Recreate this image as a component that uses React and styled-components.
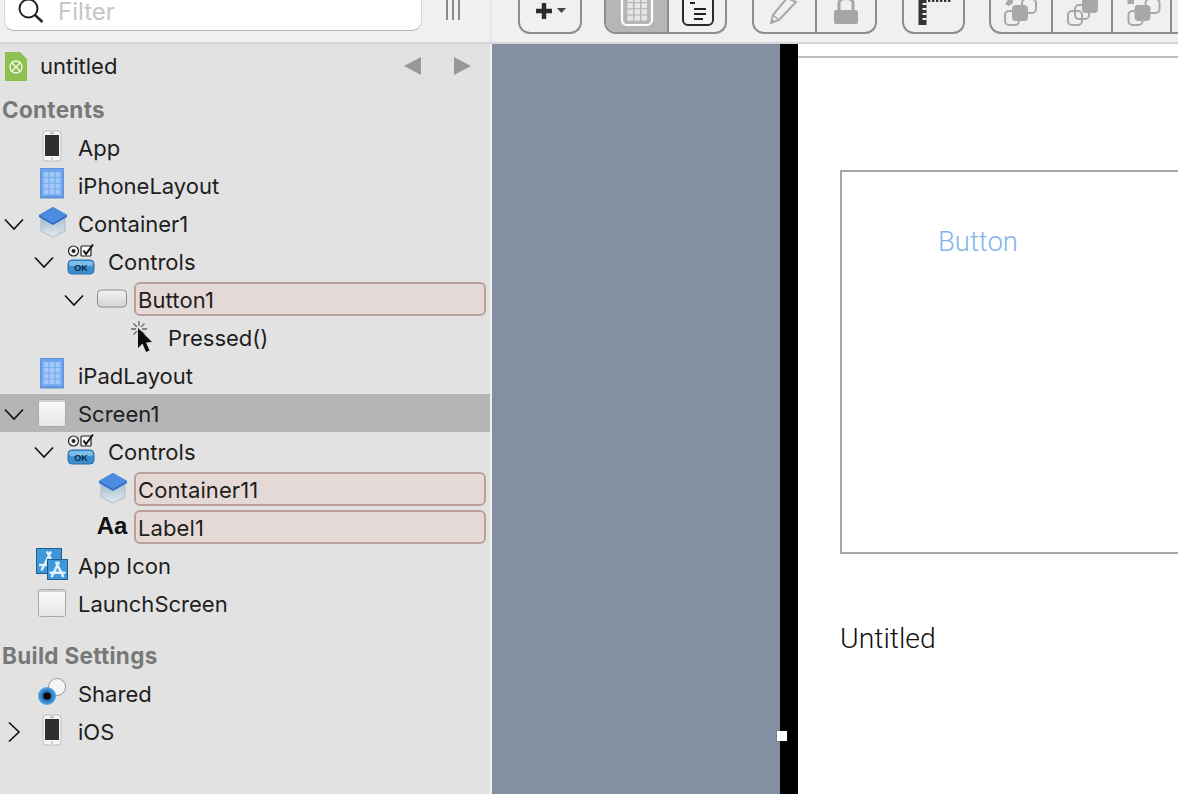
import React from "react";
import styled, { createGlobalStyle } from "styled-components";

const GlobalStyle = createGlobalStyle`
  html, body {
    margin: 0;
    padding: 0;
    width: 1178px;
    height: 794px;
    overflow: hidden;
    background: #f0f0f0;
    font-family: Inter, "Liberation Sans", sans-serif;
  }
`;

const Page = styled.div`
  width: 1178px;
  height: 794px;
  display: flex;
  flex-direction: column;
  overflow: hidden;
`;

const Toolbar = styled.div`
  display: flex;
  height: 42px;
  flex-shrink: 0;
  background: #f0f0f0;
  border-bottom: 2px solid #d6d6d6;
`;

const FilterArea = styled.div`
  width: 492px;
  flex-shrink: 0;
  display: flex;
  align-items: flex-start;
  padding-left: 4px;
  box-sizing: border-box;
  border-right: 2px solid #e6e6e6;
`;

const FilterBox = styled.div`
  width: 418px;
  height: 31px;
  display: flex;
  align-items: center;
  gap: 14px;
  padding: 0 0 6px 13px;
  box-sizing: border-box;
  background: #fff;
  border-bottom: 1px solid #b4b4b4;
  border-left: 1px solid #d8d8d8;
  border-right: 1px solid #d8d8d8;
  border-radius: 0 0 10px 10px;
  color: #c6c6c6;
  font-size: 24px;
  line-height: 24px;
`;

const Grip = styled.div`
  margin-left: 24px;
  display: flex;
  gap: 4px;
  height: 20px;
`;

const GripLine = styled.div`
  width: 2px;
  background: #8a8a8a;
`;

const ToolGroups = styled.div`
  flex: 1;
  display: flex;
  align-items: flex-start;
  overflow: hidden;
`;

const ToolGroup = styled.div`
  display: flex;
  flex-shrink: 0;
  height: 34px;
  margin-left: ${({ $gap }) => $gap}px;
  box-sizing: border-box;
  border: 2px solid #8e8e8e;
  border-top: none;
  border-radius: 0 0 12px 12px;
  overflow: hidden;
`;

const ToolButton = styled.div`
  width: ${({ $w }) => $w}px;
  height: 100%;
  box-sizing: border-box;
  display: flex;
  justify-content: center;
  background: ${({ $on }) => ($on ? "#b6b6b6" : "transparent")};
  & + & {
    border-left: 2px solid #8e8e8e;
  }
`;

const Main = styled.div`
  flex: 1;
  display: flex;
  min-height: 0;
`;

const Sidebar = styled.div`
  width: 490px;
  flex-shrink: 0;
  background: #e2e2e2;
  padding-top: 3px;
  box-sizing: border-box;
  color: #1e1e1e;
  font-size: 22px;
`;

const Splitter = styled.div`
  width: 2px;
  background: #efefef;
`;

const ProjectRow = styled.div`
  height: 38px;
  display: flex;
  align-items: center;
  padding-left: 5px;
  gap: 13px;
`;

const ProjectName = styled.div`
  flex: 1;
`;

const NavArrows = styled.div`
  display: flex;
  gap: 33px;
  margin-right: 19px;
`;

const SectionTitle = styled.div`
  height: 38px;
  line-height: 38px;
  padding-left: 2px;
  margin-top: ${({ $top }) => $top}px;
  font-weight: 700;
  font-size: 22.5px;
  letter-spacing: 0.3px;
  color: #787878;
`;

const Row = styled.div`
  height: 38px;
  display: flex;
  align-items: center;
  padding-left: ${({ $level }) => $level * 30}px;
  background: ${({ $selected }) => ($selected ? "#b5b5b5" : "transparent")};
  box-shadow: ${({ $selected }) => ($selected ? "0 -1px 0 #b5b5b5, inset 0 -1px 0 #e2e2e2" : "none")};
`;

const Disclosure = styled.div`
  width: 28px;
  height: 38px;
  flex-shrink: 0;
  display: flex;
  align-items: center;
  justify-content: center;
`;

const IconSlot = styled.div`
  width: 48px;
  height: 38px;
  flex-shrink: 0;
  margin-right: 2px;
  display: flex;
  align-items: center;
  justify-content: center;
`;

const TypeMark = styled.span`
  font-family: "Liberation Sans", sans-serif;
  font-weight: 700;
  font-size: 24px;
  color: #111;
  margin-top: -4px;
`;

const NameField = styled.div`
  flex: 1;
  height: 34px;
  line-height: 32px;
  margin: -2px 4px 0 -4px;
  padding-left: 2px;
  box-sizing: border-box;
  background: #e5d9d8;
  border: 2px solid #bb9f9b;
  border-radius: 6px;
  letter-spacing: 0.1px;
`;

const Backdrop = styled.div`
  width: 288px;
  flex-shrink: 0;
  background: #8490a1;
  position: relative;
`;

const Handle = styled.div`
  position: absolute;
  right: -7px;
  top: 687px;
  width: 10px;
  height: 10px;
  background: #fff;
  box-shadow: 0 0 1px #333;
  z-index: 2;
`;

const DeviceEdge = styled.div`
  width: 18px;
  flex-shrink: 0;
  background: #000;
`;

const Canvas = styled.div`
  flex: 1;
  background: #fff;
  padding-top: 12px;
  overflow: hidden;
`;

const NavLine = styled.div`
  height: 2px;
  background: #bdbdbd;
`;

const ContainerBox = styled.div`
  margin: 112px -40px 0 42px;
  height: 384px;
  box-sizing: border-box;
  border: 2px solid #a6a6a6;
  padding: 54px 0 0 96px;
`;

const ButtonText = styled.div`
  color: #82b4f2;
  font-size: 27.5px;
  line-height: 32px;
  font-family: Roboto, "Liberation Sans", sans-serif;
  font-weight: 300;
`;

const LabelText = styled.div`
  margin: 68px 0 0 42px;
  color: #111;
  font-size: 28.4px;
  line-height: 34px;
  font-family: Roboto, "Liberation Sans", sans-serif;
  font-weight: 300;
`;

const Chevron = ({ open }) => (
  <svg width="22" height="22" viewBox="0 0 22 22" fill="none" stroke="#111" strokeWidth="1.6">
    {open ? <path d="M2 6.5 11 16 20 6.5" /> : <path d="M6 1.5 16 11 6 20.5" />}
  </svg>
);

const Cell = ({ children }) => (
  <svg width="48" height="38" viewBox="0 0 48 38">
    {children}
  </svg>
);

const PhoneIcon = () => (
  <Cell>
    <rect x="15" y="2" width="18" height="30" rx="3" fill="#f6f6f6" stroke="#bcbcbc" />
    <rect x="17" y="6" width="14" height="21" fill="#2e2e2e" />
    <circle cx="24" cy="29.5" r="1.3" fill="#ccc" />
    <rect x="22" y="3.6" width="4" height="1" fill="#888" />
  </Cell>
);

const GridIcon = () => (
  <Cell>
    <rect x="12.5" y="1.5" width="23" height="29" fill="#6ea5ee" stroke="#5f93dc" />
    <rect x="12" y="29.5" width="24" height="2" fill="#5f90d4" />
    {[0, 1, 2, 3].map((r) =>
      [0, 1, 2].map((c) => (
        <rect key={`${r}-${c}`} x={15.5 + c * 6} y={5 + r * 5.8} width="5" height="5" fill="#a2c8f7" />
      ))
    )}
  </Cell>
);

const CubeIcon = () => (
  <Cell>
    <defs>
      <linearGradient id="cubeSide" x1="0" y1="0" x2="0" y2="1">
        <stop offset="0" stopColor="#9db7cc" />
        <stop offset="1" stopColor="#e4edf3" />
      </linearGradient>
    </defs>
    <path d="M13 12 25 18 25 32 13 26Z" fill="url(#cubeSide)" />
    <path d="M37 12 25 18 25 32 37 26Z" fill="url(#cubeSide)" opacity="0.85" />
    <path d="M13 12V26L25 32 37 26V12" fill="none" stroke="#a9bccb" strokeWidth="1" />
    <path d="M25 2 39 10 39 12 25 20 11 12V10Z" fill="#2f6cc4" />
    <path d="M25 2 39 10 25 18 11 10Z" fill="#4d8be0" />
  </Cell>
);

const OkText = styled.text`
  font-family: "Liberation Sans", sans-serif;
  font-weight: 700;
  font-size: 9px;
  fill: #0b2a44;
`;

const ControlsIcon = () => (
  <Cell>
    <circle cx="15.5" cy="8" r="5" fill="#f4f4f4" stroke="#222" strokeWidth="1.2" />
    <circle cx="15.5" cy="8" r="2" fill="#222" />
    <rect x="23" y="3" width="10" height="10" rx="1" fill="#f7f7f7" stroke="#222" strokeWidth="1.2" />
    <path d="M25.5 7.5 28 11 35 1.5" fill="none" stroke="#111" strokeWidth="2" />
    <rect x="10" y="17" width="26" height="14" rx="4" fill="#3b8fd0" stroke="#2a6ea8" />
    <rect x="11" y="18" width="24" height="5" rx="2.5" fill="#7dbdea" />
    <OkText x="23" y="27.5" textAnchor="middle">OK</OkText>
  </Cell>
);

const ButtonIcon = () => (
  <Cell>
    <defs>
      <linearGradient id="buttonFill" x1="0" y1="0" x2="0" y2="1">
        <stop offset="0" stopColor="#f2f2f2" />
        <stop offset="1" stopColor="#d4d4d4" />
      </linearGradient>
    </defs>
    <rect x="9.5" y="9" width="29" height="17" rx="4" fill="url(#buttonFill)" stroke="#8c8c8c" />
  </Cell>
);

const EventIcon = () => (
  <Cell>
    <g stroke="#666" strokeWidth="1.3">
      <path d="M21 2V18M13 10H29M15.5 4.5 26.5 15.5M26.5 4.5 15.5 15.5" />
    </g>
    <circle cx="21" cy="10" r="3" fill="#e2e2e2" />
    <path d="M20 9V29L24.5 24.5 28 33 31.5 31.5 28 23.5 34 23Z" fill="#0c0c0c" />
  </Cell>
);

const ScreenIcon = () => (
  <Cell>
    <defs>
      <linearGradient id="screenFill" x1="0" y1="0" x2="0" y2="1">
        <stop offset="0" stopColor="#fbfbfb" />
        <stop offset="1" stopColor="#e6e6e6" />
      </linearGradient>
    </defs>
    <rect x="10.5" y="4.5" width="27" height="27" rx="2" fill="url(#screenFill)" stroke="#a8a8a8" />
    <rect x="11" y="5" width="26" height="2" fill="#cfcfcf" />
  </Cell>
);

const AppMark = ({ x, y, s }) => (
  <g>
    <rect x={x} y={y} width={s} height={s} fill="#3d97da" stroke="#1d5f8f" />
    <path
      d={`M${x + s * 0.2} ${y + s * 0.88} L${x + s * 0.58} ${y + s * 0.12} M${x + s * 0.42} ${y + s * 0.12} L${x + s * 0.8} ${y + s * 0.88} M${x + s * 0.1} ${y + s * 0.66} H${x + s * 0.9}`}
      stroke="#dff0fb"
      strokeWidth="2.4"
      fill="none"
    />
  </g>
);

const AppIconIcon = () => (
  <Cell>
    <AppMark x={8.5} y={1.5} s={25} />
    <AppMark x={19.5} y={12.5} s={20} />
  </Cell>
);

const SharedIcon = () => (
  <Cell>
    <defs>
      <radialGradient id="eyeFill">
        <stop offset="0.35" stopColor="#1c5f9e" />
        <stop offset="0.9" stopColor="#4ea0e4" />
      </radialGradient>
    </defs>
    <circle cx="29" cy="12" r="8.5" fill="#f5f5f5" stroke="#9a9a9a" />
    <circle cx="19" cy="21" r="9" fill="url(#eyeFill)" />
    <circle cx="19" cy="21" r="3.6" fill="#080808" />
  </Cell>
);

const ProjectIcon = () => (
  <svg width="22" height="29" viewBox="0 0 22 29">
    <path d="M0 0H15L22 7V29H0Z" fill="#8cc04f" />
    <circle cx="11" cy="15" r="6" fill="none" stroke="#f3f8ea" strokeWidth="1.4" />
    <path d="M7 11 15 19M15 11 7 19" stroke="#f3f8ea" strokeWidth="1.3" />
  </svg>
);

const NavArrow = ({ right }) => (
  <svg width="17" height="18" viewBox="0 0 17 18">
    <path d={right ? "M0 0 17 9 0 18Z" : "M17 0 0 9 17 18Z"} fill="#989898" />
  </svg>
);

const SearchIcon = () => (
  <svg width="26" height="26" viewBox="0 0 26 26" fill="none" stroke="#222" strokeWidth="2">
    <circle cx="10.5" cy="9.5" r="9" />
    <path d="M17 16 24.5 23" strokeWidth="2.4" />
  </svg>
);

const ToolIcon = ({ w = 40, children }) => (
  <svg width={w} height="32" viewBox={`0 0 ${w} 32`}>
    {children}
  </svg>
);

const PlusIcon = () => (
  <ToolIcon w={34}>
    <path d="M3 11H19M11 3V19" stroke="#2c2c2c" strokeWidth="4.4" fill="none" />
    <path d="M24 8H33L28.5 13Z" fill="#444" />
  </ToolIcon>
);

const LayoutIcon = () => (
  <ToolIcon w={36}>
    <rect x="3" y="-8" width="30" height="33" rx="5" fill="#b6b6b6" stroke="#fff" strokeWidth="2.2" />
    {[0, 1, 2, 3].map((r) =>
      [0, 1, 2].map((c) => (
        <rect key={`${r}-${c}`} x={8.5 + c * 7} y={-3 + r * 6.2} width="5.5" height="5" fill="#e6e6e6" />
      ))
    )}
  </ToolIcon>
);

const OutlineIcon = () => (
  <ToolIcon w={36}>
    <rect x="4" y="-8" width="30" height="33" rx="5" fill="#f4f4f4" stroke="#2a2a2a" strokeWidth="2" />
    <path d="M11 3H16M15 9H27M15 14H27M15 19H24" stroke="#222" strokeWidth="2.2" />
  </ToolIcon>
);

const PencilIcon = () => (
  <ToolIcon w={40}>
    <path d="M6 23 8 15 22 -2 31 2 14 20Z" fill="none" stroke="#a8a8a8" strokeWidth="2" />
    <path d="M8 15 14 20" stroke="#a8a8a8" strokeWidth="1.6" />
    <path d="M6 23 7 19 10 21Z" fill="#a8a8a8" />
  </ToolIcon>
);

const LockIcon = () => (
  <ToolIcon w={40}>
    <rect x="8" y="10" width="24" height="14" rx="2" fill="#a6a6a6" />
    <path d="M13 11V3C13 -3 27 -3 27 3V11" fill="none" stroke="#a6a6a6" strokeWidth="3" />
  </ToolIcon>
);

const RulerIcon = () => (
  <ToolIcon w={44}>
    <path d="M6.5 0H14.5V25H6.5Z" fill="#333" />
    {[3, 8, 13, 18].map((y) => (
      <rect key={y} x="10.5" y={y} width="4" height="2" fill="#f0f0f0" />
    ))}
    {[16, 20, 24, 28, 32, 36].map((x) => (
      <rect key={x} x={x} y="0" width="2.4" height="2" fill="#333" />
    ))}
  </ToolIcon>
);

const Square = ({ x, y, filled }) => (
  <rect
    x={x}
    y={y}
    width={filled ? 16 : 14}
    height={filled ? 16 : 14}
    rx="4"
    fill={filled ? "#a8a8a8" : "none"}
    stroke={filled ? "none" : "#a8a8a8"}
    strokeWidth="2"
  />
);

const ForwardIcon = () => (
  <ToolIcon w={44}>
    <Square x={23} y={-1} />
    <Square x={6} y={11} />
    <Square x={13} y={5} filled />
    <path d="M6 4 9 0H14V3L10 6Z" fill="#a8a8a8" />
  </ToolIcon>
);

const FrontIcon = () => (
  <ToolIcon w={44}>
    <Square x={8} y={11} />
    <Square x={15} y={5} />
    <Square x={22} y={-3} filled />
  </ToolIcon>
);

const BackwardIcon = () => (
  <ToolIcon w={44}>
    <Square x={25.5} y={-1} />
    <Square x={8.5} y={11} />
    <Square x={14.5} y={5} filled />
    <path d="M7.5 -1H14V4H7.5Z" fill="#a8a8a8" />
  </ToolIcon>
);

const TreeRow = ({ level = 0, open, selected, icon, field, children }) => (
  <Row $level={level} $selected={selected}>
    <Disclosure>{open !== undefined && <Chevron open={open} />}</Disclosure>
    <IconSlot>{icon}</IconSlot>
    {field ? <NameField>{children}</NameField> : <span>{children}</span>}
  </Row>
);

export default function App() {
  return (
    <Page>
      <GlobalStyle />
      <Toolbar>
        <FilterArea>
          <FilterBox>
            <SearchIcon />
            Filter
          </FilterBox>
          <Grip>
            <GripLine />
            <GripLine />
            <GripLine />
          </Grip>
        </FilterArea>
        <ToolGroups>
          <ToolGroup $gap={26}>
            <ToolButton $w={60}>
              <PlusIcon />
            </ToolButton>
          </ToolGroup>
          <ToolGroup $gap={22}>
            <ToolButton $w={61} $on>
              <LayoutIcon />
            </ToolButton>
            <ToolButton $w={58}>
              <OutlineIcon />
            </ToolButton>
          </ToolGroup>
          <ToolGroup $gap={25}>
            <ToolButton $w={61}>
              <PencilIcon />
            </ToolButton>
            <ToolButton $w={60}>
              <LockIcon />
            </ToolButton>
          </ToolGroup>
          <ToolGroup $gap={25}>
            <ToolButton $w={59}>
              <RulerIcon />
            </ToolButton>
          </ToolGroup>
          <ToolGroup $gap={24}>
            <ToolButton $w={60}>
              <ForwardIcon />
            </ToolButton>
            <ToolButton $w={60}>
              <FrontIcon />
            </ToolButton>
            <ToolButton $w={59}>
              <BackwardIcon />
            </ToolButton>
            <ToolButton $w={40} />
          </ToolGroup>
        </ToolGroups>
      </Toolbar>
      <Main>
        <Sidebar>
          <ProjectRow>
            <ProjectIcon />
            <ProjectName>untitled</ProjectName>
            <NavArrows>
              <NavArrow />
              <NavArrow right />
            </NavArrows>
          </ProjectRow>
          <SectionTitle $top={6}>Contents</SectionTitle>
          <TreeRow icon={<PhoneIcon />}>App</TreeRow>
          <TreeRow icon={<GridIcon />}>iPhoneLayout</TreeRow>
          <TreeRow open icon={<CubeIcon />}>Container1</TreeRow>
          <TreeRow level={1} open icon={<ControlsIcon />}>Controls</TreeRow>
          <TreeRow level={2} open field icon={<ButtonIcon />}>Button1</TreeRow>
          <TreeRow level={3} icon={<EventIcon />}>Pressed()</TreeRow>
          <TreeRow icon={<GridIcon />}>iPadLayout</TreeRow>
          <TreeRow open selected icon={<ScreenIcon />}>Screen1</TreeRow>
          <TreeRow level={1} open icon={<ControlsIcon />}>Controls</TreeRow>
          <TreeRow level={2} field icon={<CubeIcon />}>Container11</TreeRow>
          <TreeRow level={2} field icon={<TypeMark>Aa</TypeMark>}>Label1</TreeRow>
          <TreeRow icon={<AppIconIcon />}>App Icon</TreeRow>
          <TreeRow icon={<ScreenIcon />}>LaunchScreen</TreeRow>
          <SectionTitle $top={14}>Build Settings</SectionTitle>
          <TreeRow icon={<SharedIcon />}>Shared</TreeRow>
          <TreeRow open={false} icon={<PhoneIcon />}>iOS</TreeRow>
        </Sidebar>
        <Splitter />
        <Backdrop>
          <Handle />
        </Backdrop>
        <DeviceEdge />
        <Canvas>
          <NavLine />
          <ContainerBox>
            <ButtonText>Button</ButtonText>
          </ContainerBox>
          <LabelText>Untitled</LabelText>
        </Canvas>
      </Main>
    </Page>
  );
}
